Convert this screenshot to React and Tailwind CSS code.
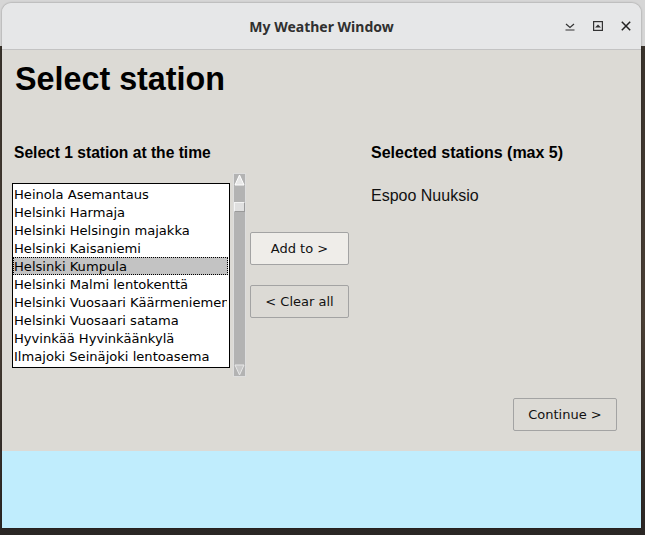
import React from "react";

const stations = [
  "Heinola Asemantaus",
  "Helsinki Harmaja",
  "Helsinki Helsingin majakka",
  "Helsinki Kaisaniemi",
  "Helsinki Kumpula",
  "Helsinki Malmi lentokenttä",
  "Helsinki Vuosaari Käärmeniemen",
  "Helsinki Vuosaari satama",
  "Hyvinkää Hyvinkäänkylä",
  "Ilmajoki Seinäjoki lentoasema",
];

function TkButton({ children, light, wide }) {
  return (
    <div
      className={`${wide ? "w-[104px]" : "w-[99px]"} h-[33px] flex items-center justify-center rounded-[2px] border border-[#a3a3a3] text-[13px] text-[#111] ${
        light ? "bg-[#efede9]" : "bg-[#dcdad5]"
      }`}
      style={{ fontFamily: '"DejaVu Sans", sans-serif' }}
    >
      {children}
    </div>
  );
}

export default function App() {
  return (
    <div className="w-[645px] h-[535px] overflow-hidden bg-[linear-gradient(to_bottom,#d6d6d6_0px,#d6d6d6_46px,#3a332c_46px,#4a3f35_60%,#2a2624_100%)] pt-[3px] pl-[2px]">
      <div className="w-[639px] h-[525px] flex flex-col rounded-t-[9px] overflow-hidden shadow-[0_0_2px_rgba(0,0,0,0.4)]">
        {/* Title bar */}
        <div className="h-[47px] shrink-0 bg-[#e6e7e8] border-b border-[#c3c3c3] flex items-center relative">
          <div
            className="flex-1 text-center text-[14px] font-bold text-[#303030]"
            style={{ fontFamily: '"Noto Sans", sans-serif' }}
          >
            My Weather Window
          </div>
          <div className="absolute right-[10px] top-[18px] flex items-center gap-[18px]">
            <svg width="10" height="10" viewBox="0 0 10 10" className="text-[#333]">
              <path d="M1 3 L5 6.5 L9 3" fill="none" stroke="currentColor" strokeWidth="1.2" />
              <path d="M0.5 9 H9.5" stroke="currentColor" strokeWidth="1.2" />
            </svg>
            <svg width="10" height="10" viewBox="0 0 10 10" className="text-[#333]">
              <rect x="0.6" y="0.6" width="8.8" height="8.8" fill="none" stroke="currentColor" strokeWidth="1.2" />
              <path d="M2 6.5 L5 3.5 L8 6.5 Z" fill="currentColor" />
            </svg>
            <svg width="10" height="10" viewBox="0 0 10 10" className="text-[#222]">
              <path d="M0.8 0.8 L9.2 9.2 M9.2 0.8 L0.8 9.2" stroke="currentColor" strokeWidth="1.5" />
            </svg>
          </div>
        </div>

        {/* Content */}
        <div className="h-[401px] shrink-0 bg-[#dcdad5] flex flex-col" style={{ fontFamily: '"Liberation Sans", Arial, sans-serif' }}>
          <div className="pl-[13px] pt-[11px] text-[32.3px] leading-[37px] font-bold text-black">
            Select station
          </div>

          <div className="flex mt-[44px]">
            {/* Left column */}
            <div className="pl-[10px] flex flex-col">
              <div className="pl-[2px] pt-[2px] text-[15.6px] leading-[18px] font-bold text-black">
                Select 1 station at the time
              </div>
              <div className="flex items-start mt-[11px]">
                <div
                  className="mt-[10px] w-[218px] h-[185px] border border-black bg-white pt-[1px] pr-[1px] overflow-hidden"
                  style={{ fontFamily: '"DejaVu Sans", sans-serif' }}
                >
                  {stations.map((s, i) => (
                    <div
                      key={s}
                      className={`h-[18px] leading-[17px] text-[13.1px] text-black whitespace-nowrap overflow-hidden border ${
                        i === 4 ? "bg-[#c3c3c3] border-dotted border-black" : "border-transparent"
                      }`}
                    >
                      {s}
                    </div>
                  ))}
                </div>
                {/* Scrollbar */}
                <div className="ml-[3px] w-[13px] h-[204px] bg-[#b3b3b3] border border-[#dedede] flex flex-col justify-between relative">
                  <svg width="11" height="12" viewBox="0 0 11 12">
                    <path d="M5.5 1 L10 11 L1 11 Z" fill="#e8e8e8" stroke="#ffffff" strokeWidth="1" />
                  </svg>
                  <div className="absolute left-0 top-[28px] w-[11px] h-[10px] bg-[#e0e0e0] border border-[#f4f4f4] border-b-[#9a9a9a] border-r-[#9a9a9a]" />
                  <svg width="11" height="12" viewBox="0 0 11 12">
                    <path d="M1 1 L10 1 L5.5 11 Z" fill="#c8c8c8" stroke="#e8e8e8" strokeWidth="1" />
                  </svg>
                </div>
              </div>
            </div>

            {/* Middle buttons */}
            <div className="ml-[4px] flex flex-col pt-[90px] gap-[20px]">
              <TkButton light>Add to &gt;</TkButton>
              <TkButton>&lt; Clear all</TkButton>
            </div>

            {/* Right column */}
            <div className="ml-[22px] flex flex-col">
              <div className="pt-[2px] text-[16px] leading-[18px] font-bold text-black">
                Selected stations (max 5)
              </div>
              <div className="mt-[25px] text-[16px] leading-[18px] text-[#111]">
                Espoo Nuuksio
              </div>
            </div>
          </div>

          <div className="flex justify-end pr-[24px] mt-[21px]">
            <TkButton wide>Continue &gt;</TkButton>
          </div>
        </div>

        {/* Bottom blue area */}
        <div className="flex-1 bg-[#c0edfd]" />
      </div>
    </div>
  );
}
